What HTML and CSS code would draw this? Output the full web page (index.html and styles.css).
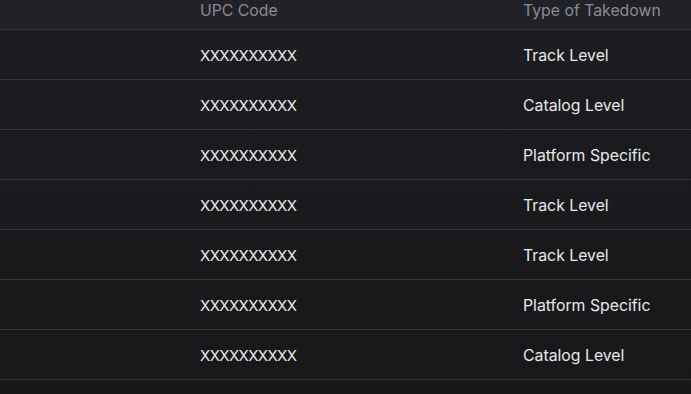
FILE: index.html
```html
<!DOCTYPE html>
<html>
<head>
<meta charset="utf-8">
<link rel="stylesheet" href="styles.css">
</head>
<body>
<div class="table">
  <div class="row head">
    <div class="cell"></div>
    <div class="cell">UPC Code</div>
    <div class="cell">Type of Takedown</div>
  </div>
  <div class="row"><div class="cell"></div><div class="cell code">XXXXXXXXXX</div><div class="cell">Track Level</div></div>
  <div class="row"><div class="cell"></div><div class="cell code">XXXXXXXXXX</div><div class="cell">Catalog Level</div></div>
  <div class="row"><div class="cell"></div><div class="cell code">XXXXXXXXXX</div><div class="cell">Platform Specific</div></div>
  <div class="row"><div class="cell"></div><div class="cell code">XXXXXXXXXX</div><div class="cell">Track Level</div></div>
  <div class="row"><div class="cell"></div><div class="cell code">XXXXXXXXXX</div><div class="cell">Track Level</div></div>
  <div class="row"><div class="cell"></div><div class="cell code">XXXXXXXXXX</div><div class="cell">Platform Specific</div></div>
  <div class="row"><div class="cell"></div><div class="cell code">XXXXXXXXXX</div><div class="cell">Catalog Level</div></div>
  <div class="row"><div class="cell"></div><div class="cell"></div><div class="cell"></div></div>
</div>
</body>
</html>
```
FILE: styles.css
```css
html, body {
  margin: 0;
  padding: 0;
  background: #18181b;
  overflow: hidden;
}
body {
  width: 691px;
  height: 394px;
  font-family: Inter, "Noto Sans", sans-serif;
}
.table {
  display: flex;
  flex-direction: column;
  background: linear-gradient(180deg, #1d1d22 0%, #19191c 60%, #18181b 100%);
}
.row {
  display: grid;
  grid-template-columns: 200px 323px 1fr;
  align-items: center;
  height: 49px;
  padding-top: 1px;
  box-sizing: content-box;
  border-bottom: 1px solid #36363a;
  font-size: 15.8px;
  color: #e8e8ea;
}
.row + .row {
  height: 48px;
  padding-top: 1px;
}
.row.head {
  height: 21px;
  padding-top: 0;
  padding-bottom: 8px;
  background: #212228;
  color: #8b8b92;
}
.cell {
  white-space: nowrap;
}
.code {
  font-size: 15px;
  letter-spacing: -0.6px;
}
```
